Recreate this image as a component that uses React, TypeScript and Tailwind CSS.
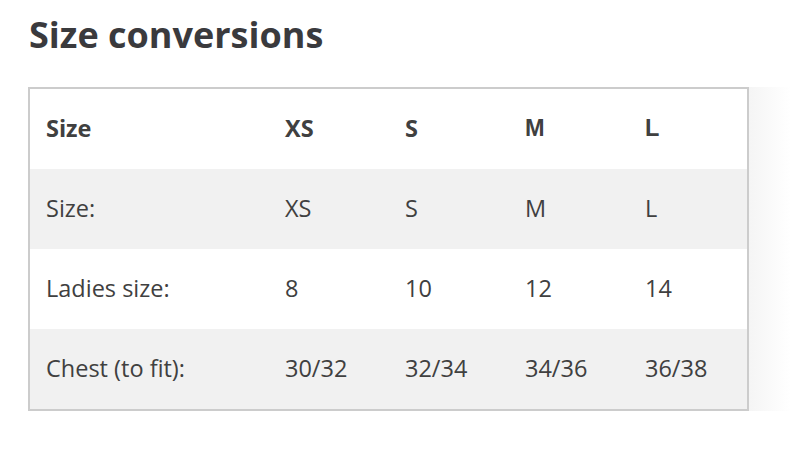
import React from "react";

const rows = [
  ["Size:", "XS", "S", "M", "L"],
  ["Ladies size:", "8", "10", "12", "14"],
  ["Chest (to fit):", "30/32", "32/34", "34/36", "36/38"],
];

const cols = "grid grid-cols-[239px_120px_120px_120px_118px] h-[80px] items-center";

export default function App() {
  return (
    <div
      className="w-[790px] h-[454px] bg-white pl-[28px] pt-[12px] text-[#404040]"
      style={{ fontFamily: '"Open Sans", sans-serif' }}
    >
      <h2 className="text-[36px] font-bold leading-[46px] pl-[1px] text-[#3a3a3d]">Size conversions</h2>
      <div className="relative mt-[29px] w-[721px]">
        <div className="border-2 border-[#cccccc] text-[23.5px]">
          <div className={cols + " bg-white font-bold"}>
            <div className="pl-[16px]">Size</div>
            <div className="pl-[16px]">XS</div>
            <div className="pl-[16px]">S</div>
            <div className="pl-[16px]" style={{ fontFamily: '"Liberation Sans", sans-serif' }}>M</div>
            <div className="pl-[16px]" style={{ fontFamily: '"Liberation Sans", sans-serif' }}>L</div>
          </div>
          {rows.map((r, i) => (
            <div key={i} className={cols + (i % 2 === 0 ? " bg-[#f1f1f1]" : " bg-white")}>
              {r.map((c, j) => (
                <div key={j} className="pl-[16px]">{c}</div>
              ))}
            </div>
          ))}
        </div>
        <div className="absolute left-full top-0 bottom-0 w-[42px] bg-gradient-to-r from-[#f5f5f5] to-white" />
      </div>
    </div>
  );
}
